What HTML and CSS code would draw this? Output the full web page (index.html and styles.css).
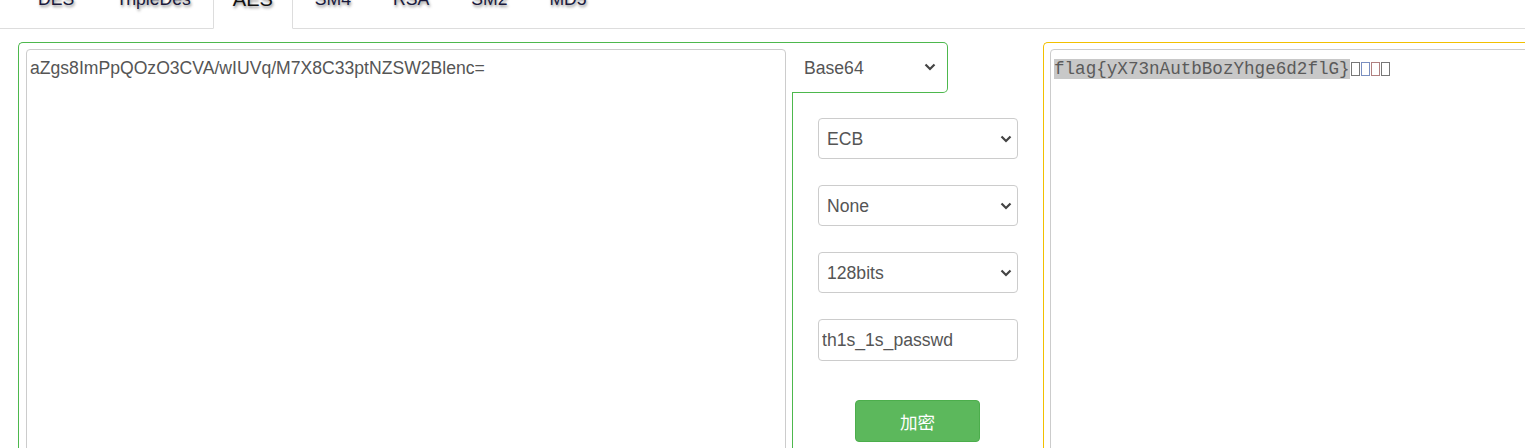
FILE: index.html
```html
<!DOCTYPE html>
<html lang="zh">
<head>
<meta charset="utf-8">
<title>AES</title>
<link rel="stylesheet" href="styles.css">
</head>
<body>
<ul class="nav">
  <li class="tab">DES</li>
  <li class="tab">TripleDes</li>
  <li class="tab active">AES</li>
  <li class="tab">SM4</li>
  <li class="tab">RSA</li>
  <li class="tab">SM2</li>
  <li class="tab">MD5</li>
</ul>
<div class="main">
  <div class="input-col">
    <div class="area area-in">aZgs8ImPpQOzO3CVA/wIUVq/M7X8C33ptNZSW2Blenc=</div>
  </div>
  <div class="ctrl-col">
    <div class="enc-box">
      <div class="sel-wrap">
        <select class="sel sel-plain"><option>Base64</option></select>
        <svg class="chev chev-enc" width="12" height="8" viewBox="0 0 12 8"><path d="M1.5 1.5 L6 6 L10.5 1.5" fill="none" stroke="#444" stroke-width="2.2"/></svg>
      </div>
    </div>
    <div class="ctrl-body">
      <div class="sel-wrap field">
        <select class="sel"><option>ECB</option></select>
        <svg class="chev" width="12" height="8" viewBox="0 0 12 8"><path d="M1.5 1.5 L6 6 L10.5 1.5" fill="none" stroke="#444" stroke-width="2.2"/></svg>
      </div>
      <div class="sel-wrap field">
        <select class="sel"><option>None</option></select>
        <svg class="chev" width="12" height="8" viewBox="0 0 12 8"><path d="M1.5 1.5 L6 6 L10.5 1.5" fill="none" stroke="#444" stroke-width="2.2"/></svg>
      </div>
      <div class="sel-wrap field">
        <select class="sel"><option>128bits</option></select>
        <svg class="chev" width="12" height="8" viewBox="0 0 12 8"><path d="M1.5 1.5 L6 6 L10.5 1.5" fill="none" stroke="#444" stroke-width="2.2"/></svg>
      </div>
      <input class="inp field" type="text" value="th1s_1s_passwd">
      <button class="btn">加密</button>
    </div>
  </div>
  <div class="output-col">
    <div class="area area-out"><span class="hl">flag{yX73nAutbBozYhge6d2flG}</span><span class="tofu"></span><span class="tofu t2"></span><span class="tofu t3"></span><span class="tofu"></span></div>
  </div>
</div>
</body>
</html>
```

FILE: styles.css
```css
html, body {
  margin: 0;
  padding: 0;
  background: #fff;
  overflow: hidden;
  height: 448px;
}
body {
  font-family: "Liberation Sans", Arial, sans-serif;
  font-size: 17.6px;
  color: #555;
}
.nav {
  list-style: none;
  margin: -24px 0 0 0;
  padding: 0 0 0 18px;
  display: flex;
  border-bottom: 1px solid #ddd;
}
.tab {
  padding: 10px 19px 16px;
  line-height: 25px;
  margin-right: 2px;
  margin-bottom: -1px;
  border: 1px solid transparent;
  border-radius: 4px 4px 0 0;
  color: #1a1a3c;
  text-shadow: 1px 2px 3px rgba(0, 0, 0, 0.45);
}
.tab.active {
  border-color: #ddd #ddd transparent;
  background: #fff;
  font-size: 20px;
  color: #111;
}
.main {
  display: flex;
  margin-top: 13px;
  padding-left: 18px;
}
.input-col {
  width: 760px;
  flex: none;
  border-top: 1px solid #4db84d;
  border-left: 1px solid #4db84d;
  border-top-left-radius: 5px;
  padding: 6px 6px 0 7px;
}
.area {
  border: 1px solid #ccc;
  border-radius: 4px;
  height: 520px;
  line-height: 25px;
  box-sizing: border-box;
}
.area-in {
  width: 760px;
  padding: 6px 3px;
  color: #555;
}
.ctrl-col {
  width: 251px;
  flex: none;
  display: flex;
  flex-direction: column;
}
.enc-box {
  width: 155px;
  height: 49px;
  border: 1px solid #4db84d;
  border-left: none;
  border-radius: 0 5px 5px 0;
}
.sel-wrap {
  position: relative;
}
.chev {
  position: absolute;
  right: 6px;
  top: 17px;
  pointer-events: none;
}
.chev-enc {
  right: 11px;
  top: 20px;
}
.sel {
  appearance: none;
  -webkit-appearance: none;
  width: 200px;
  height: 41px;
  border: 1px solid #ccc;
  border-radius: 4px;
  background: #fff;
  font-family: "Liberation Sans", Arial, sans-serif;
  font-size: 17.6px;
  color: #555;
  padding: 0 0 0 8px;
  margin: 0;
  outline: none;
  display: block;
}
.sel-plain {
  width: 155px;
  height: 49px;
  border: none;
  background: transparent;
  padding-left: 12px;
}
.ctrl-body {
  flex: 1;
  border-left: 1px solid #4db84d;
  padding: 25px 0 0 25px;
  display: flex;
  flex-direction: column;
  align-items: flex-start;
  width: 200px;
}
.field {
  margin-bottom: 26px;
}
.inp {
  box-sizing: border-box;
  width: 200px;
  height: 42px;
  border: 1px solid #ccc;
  border-radius: 4px;
  font-family: "Liberation Sans", Arial, sans-serif;
  font-size: 17.6px;
  color: #555;
  padding: 0 3px;
  margin: 0 0 39px 0;
  outline: none;
}
.btn {
  align-self: flex-start;
  margin-left: 37px;
  width: 125px;
  height: 42px;
  background: #5cb85c;
  border: 1px solid #4cae4c;
  border-radius: 4px;
  color: #fff;
  font-family: "Noto Sans CJK SC", "Liberation Sans", sans-serif;
  font-size: 17.6px;
  padding: 0;
}
.output-col {
  width: 600px;
  flex: none;
  border-top: 1px solid #f2c000;
  border-left: 1px solid #f2c000;
  border-top-left-radius: 5px;
  padding: 6px 0 0 6px;
}
.area-out {
  width: 700px;
  padding: 7px 3px;
  font-family: "Liberation Mono", "Courier New", monospace;
  font-size: 17.6px;
  color: #5a5a5a;
}
.hl {
  background: #c8c8c8;
}
.tofu {
  display: inline-block;
  width: 7px;
  height: 12px;
  border: 1px solid #777;
  margin-left: 1px;
  vertical-align: -2px;
  box-sizing: content-box;
}
.tofu.t2 {
  border-color: #7a8fc0;
}
.tofu.t3 {
  border-color: #b08080;
}
```
